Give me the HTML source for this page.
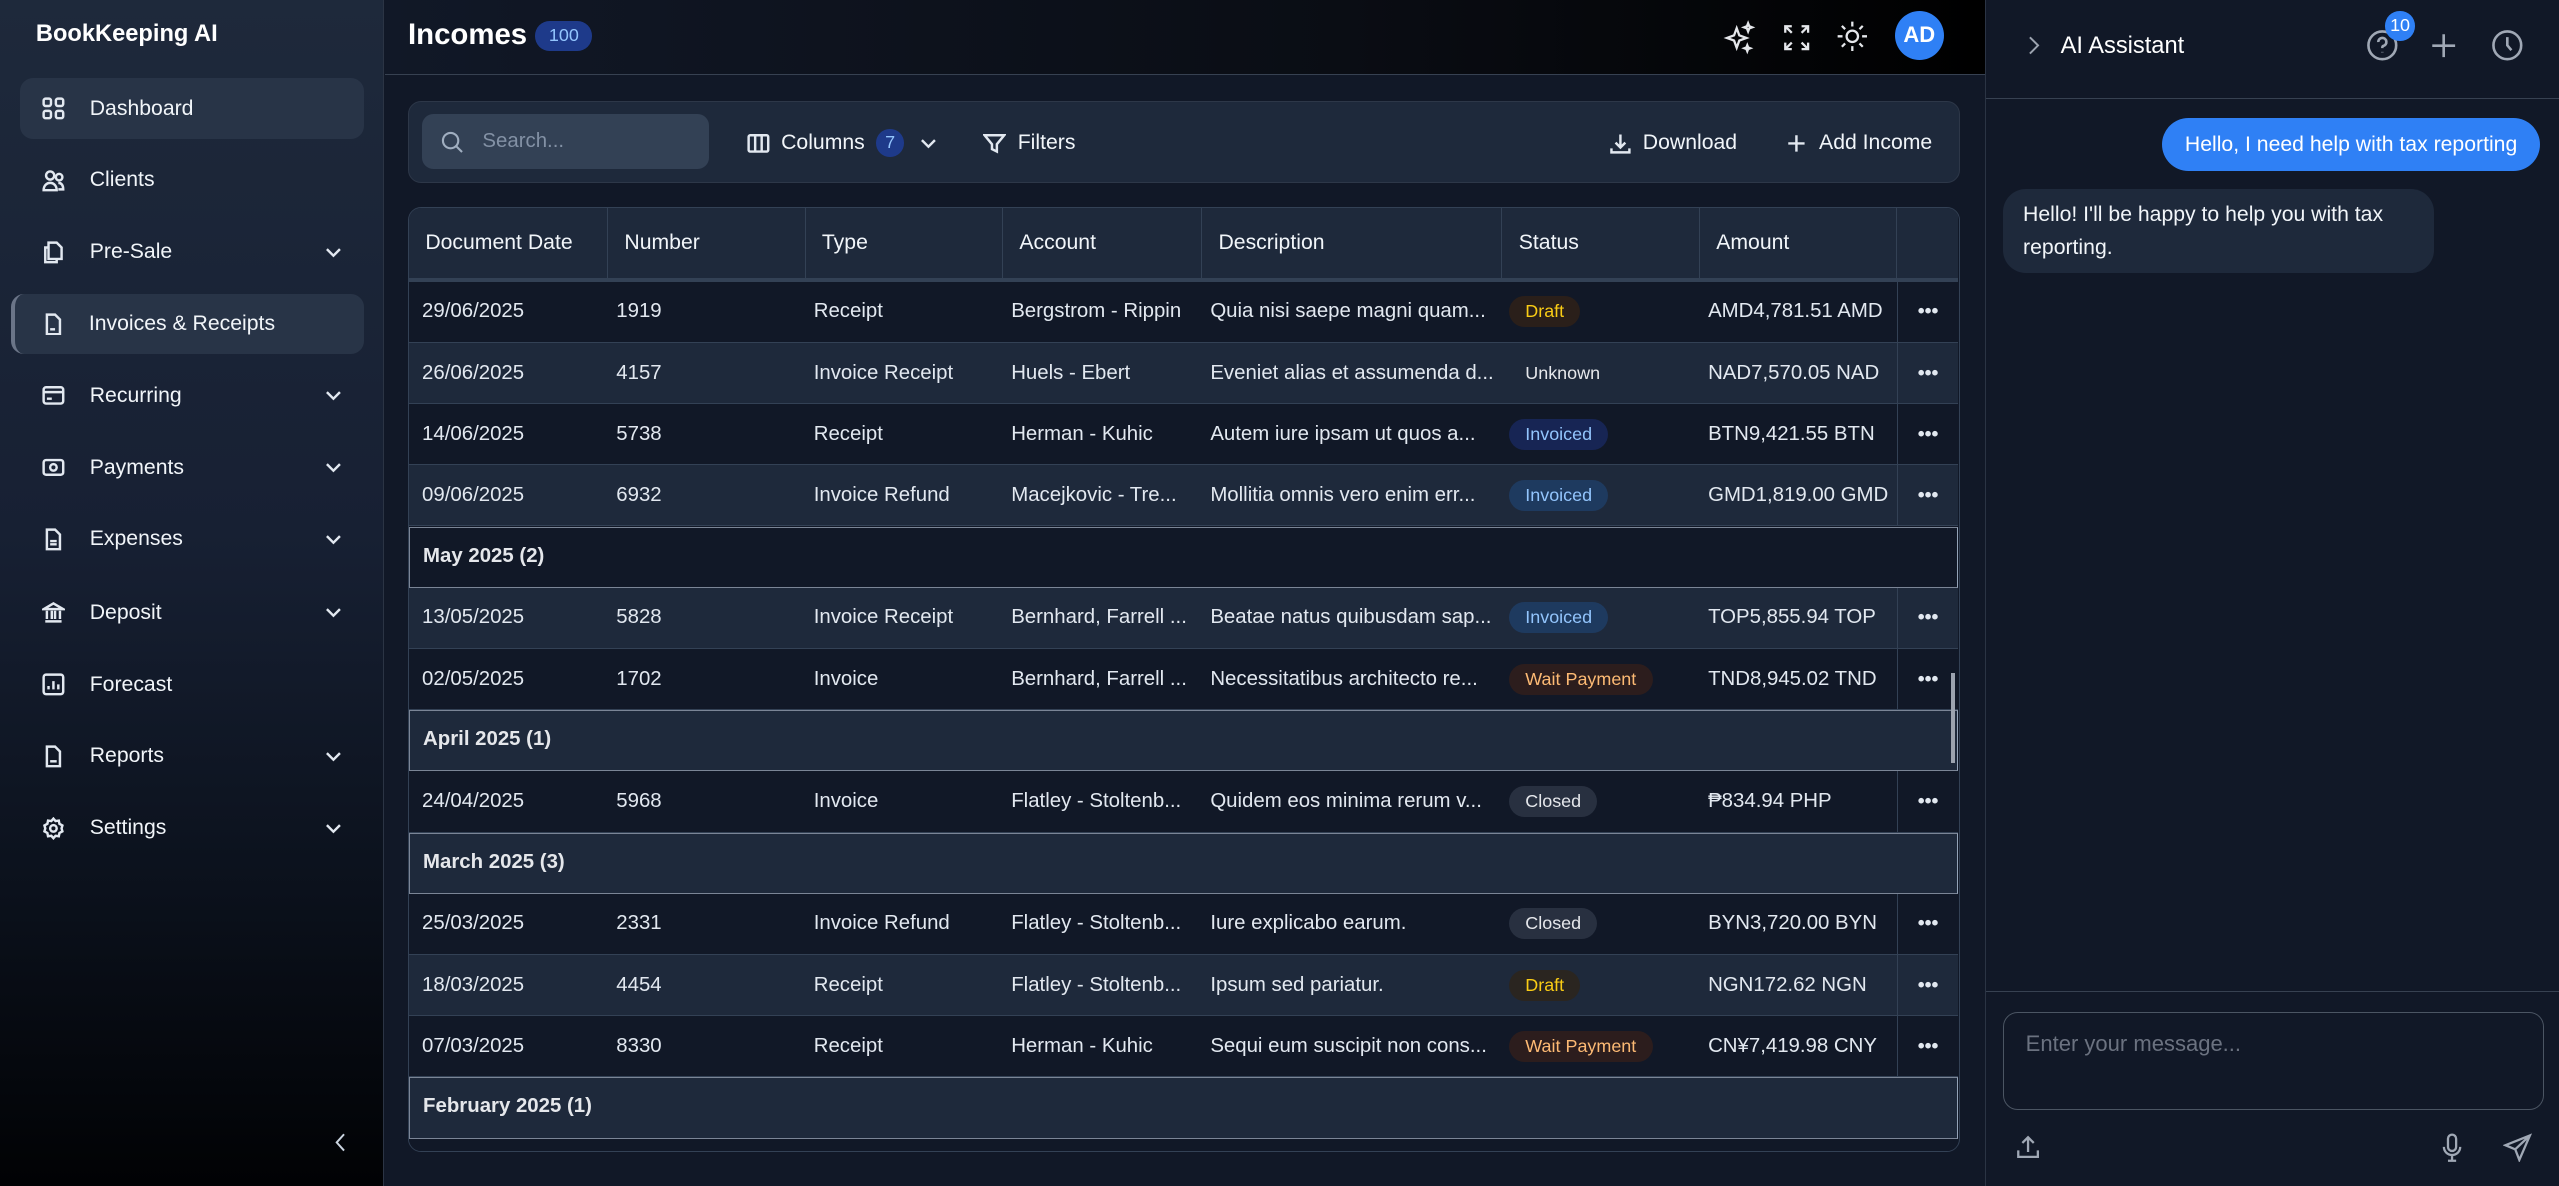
<!DOCTYPE html>
<html><head><meta charset="utf-8"><style>
*{box-sizing:border-box;margin:0;padding:0}
html,body{width:2559px;height:1186px;overflow:hidden;background:#111827}
#r{zoom:1.63202;width:1568px;height:727px;position:relative;font-family:"Liberation Sans",sans-serif;color:#e2e8f0;font-size:12.5px;background:#111827;overflow:hidden}
.abs{position:absolute}
#sb{left:0;top:0;width:235px;height:727px;background:linear-gradient(180deg,#1e293b 0%,#172033 45%,#0b111c 75%,#010204 100%);border-right:1px solid #2b3444}
.logo{left:22px;top:13px;font-weight:bold;font-size:14.5px;color:#fff}
.nav{left:12px;width:211px;height:37px;border-radius:8px;display:flex;align-items:center;padding-left:14px;font-size:13px;color:#f1f5f9}
.nav.act{background:#283447}
.nav svg{width:14px;height:14px;margin-right:15px;stroke:#e2e8f0;fill:none;stroke-width:1.5}
.nav .chev{position:absolute;right:12px;margin:0}
#hd{left:236px;top:0;width:980px;height:46px;background:linear-gradient(90deg,#111827 0%,#0a0d14 60%,#000 100%);border-bottom:1px solid #374151}
.title{left:14px;top:11px;font-size:18px;font-weight:bold;color:#fff}
.badge{left:92px;top:13px;width:35px;height:18px;border-radius:9px;background:#1e3a8a;color:#93c5fd;font-size:11px;text-align:center;line-height:18px}
#tb{left:250px;top:62px;width:951px;height:50px;background:#1e293b;border:1px solid #2d3748;border-radius:8px}
.search{left:8px;top:7px;width:176px;height:34px;background:#334155;border-radius:7px;color:#8391a5;font-size:12.5px;padding-left:37px;line-height:34px}
.tbtn{top:0;height:50px;display:flex;align-items:center;font-size:13px;color:#f1f5f9}
.tbtn svg{stroke:#e2e8f0;fill:none;stroke-width:1.5;width:14px;height:14px;margin-right:7px}
#tbl{left:250px;top:127px;width:951px;height:579px;border:1px solid #334155;border-radius:8px;overflow:hidden;background:#111827}
.row{position:absolute;left:0;width:949px;height:37.5px;border-bottom:1px solid #334155}
.row div{position:absolute;top:0;height:100%;display:flex;align-items:center;white-space:nowrap;overflow:hidden;font-size:12.5px;color:#e2e8f0}
.hrow{top:0;height:45px;background:#1e293b;border-bottom:3px solid #334155}
.hrow div{border-right:1px solid #334155;padding-left:10px;font-size:13px;color:#f1f5f9}
.L{background:#1e293b}.D{background:#111827}
.grp{position:absolute;left:0;width:949px;height:37.5px;border:1px solid #7b8596;border-right-color:#94a3b8;font-weight:bold;font-size:12.5px;padding-left:8px;line-height:35px;color:#e5e7eb}
.pill{height:19px!important;top:9px!important;border-radius:10px;padding:0 10px;font-size:11px!important}
.dots{font-weight:bold;font-size:12px!important;justify-content:center;border-left:1px solid #334155}
#ai{left:1216px;top:0;width:352px;height:727px;background:#111827;border-left:1px solid #2b3444}
</style></head><body><div id="r">

<div id="sb" class="abs">
<div class="abs logo">BookKeeping AI</div>
<div class="abs nav act" style="top:48px"><svg viewBox="0 0 14 14"><rect x="1" y="1" width="4.5" height="4.5" rx="1.2"/><rect x="8.5" y="1" width="4.5" height="4.5" rx="1.2"/><rect x="1" y="8.5" width="4.5" height="4.5" rx="1.2"/><rect x="8.5" y="8.5" width="4.5" height="4.5" rx="1.2"/></svg>Dashboard</div>
<div class="abs nav" style="top:92px"><svg viewBox="0 0 14 14"><circle cx="5" cy="4" r="2.5"/><path d="M1 13c0-3 2-4.5 4-4.5s4 1.5 4 4.5z"/><circle cx="10.5" cy="5" r="2"/><path d="M10 8.5c2 0 3 1.5 3 4h-3"/></svg>Clients</div>
<div class="abs nav" style="top:136px"><svg viewBox="0 0 14 14"><path d="M4 1h5l3 3v7H4z"/><path d="M4 4H2v9h7v-2"/></svg>Pre-Sale<svg class="chev" viewBox="0 0 14 14"><path d="M3 5l4 4 4-4"/></svg></div>
<div class="abs nav act" style="top:180px;left:7px;width:216px;padding-left:16px;border-left:3px solid #6b7588"><svg viewBox="0 0 14 14"><path d="M3 1h5l3 3v9H3z"/><path d="M5 10h3"/></svg>Invoices &amp; Receipts</div>
<div class="abs nav" style="top:224px"><svg viewBox="0 0 14 14"><rect x="1" y="2" width="12" height="10" rx="1.5"/><path d="M1 5h12M3 9h3"/></svg>Recurring<svg class="chev" viewBox="0 0 14 14"><path d="M3 5l4 4 4-4"/></svg></div>
<div class="abs nav" style="top:268px"><svg viewBox="0 0 14 14"><rect x="1" y="2.5" width="12" height="9" rx="1.5"/><circle cx="7" cy="7" r="2"/></svg>Payments<svg class="chev" viewBox="0 0 14 14"><path d="M3 5l4 4 4-4"/></svg></div>
<div class="abs nav" style="top:312px"><svg viewBox="0 0 14 14"><path d="M3 1h5l3 3v9H3z"/><path d="M5 8h4M5 10h4"/></svg>Expenses<svg class="chev" viewBox="0 0 14 14"><path d="M3 5l4 4 4-4"/></svg></div>
<div class="abs nav" style="top:357px"><svg viewBox="0 0 14 14"><path d="M1 5l6-3.5L13 5zM2 12.5h10M3 6v5M6 6v5M8 6v5M11 6v5"/></svg>Deposit<svg class="chev" viewBox="0 0 14 14"><path d="M3 5l4 4 4-4"/></svg></div>
<div class="abs nav" style="top:401px"><svg viewBox="0 0 14 14"><rect x="1" y="1" width="12" height="12" rx="1.5"/><path d="M4 10V8M7 10V5M10 10V7"/></svg>Forecast</div>
<div class="abs nav" style="top:445px"><svg viewBox="0 0 14 14"><path d="M3 1h5l3 3v9H3z"/><path d="M5 10h4"/></svg>Reports<svg class="chev" viewBox="0 0 14 14"><path d="M3 5l4 4 4-4"/></svg></div>
<div class="abs nav" style="top:489px"><svg viewBox="0 0 14 14"><circle cx="7" cy="7" r="2"/><path d="M7 1l1.3 1.5 2-.3.4 2 1.8 1L12 7l.5 1.8-1.8 1-.4 2-2-.3L7 13l-1.3-1.5-2 .3-.4-2-1.8-1L2 7l-.5-1.8 1.8-1 .4-2 2 .3z"/></svg>Settings<svg class="chev" viewBox="0 0 14 14"><path d="M3 5l4 4 4-4"/></svg></div>
<svg class="abs" style="left:203px;top:693px" width="12" height="14" viewBox="0 0 12 14"><path d="M8 2L3.5 7 8 12" stroke="#cbd5e1" fill="none" stroke-width="1.2"/></svg>
</div>

<div id="hd" class="abs">
<div class="abs title">Incomes</div>
<div class="abs badge">100</div>
<svg class="abs" style="left:819px;top:12px" width="22" height="22" viewBox="0 0 22 22" fill="none" stroke="#e5e7eb" stroke-width="1.4"><path d="M9 5l1.6 4.4L15 11l-4.4 1.6L9 17l-1.6-4.4L3 11l4.4-1.6z"/><path d="M16 2l.7 1.8L18.5 4.5l-1.8.7L16 7l-.7-1.8-1.8-.7 1.8-.7z"/><path d="M15.5 15.5l.5 1.3 1.3.5-1.3.5-.5 1.3-.5-1.3-1.3-.5 1.3-.5z"/></svg>
<svg class="abs" style="left:856px;top:14px" width="18" height="18" viewBox="0 0 18 18" fill="none" stroke="#e5e7eb" stroke-width="1.4"><path d="M2 6V2h4M2 2l4 4M16 6V2h-4M16 2l-4 4M2 12v4h4M2 16l4-4M16 12v4h-4M16 16l-4-4"/></svg>
<svg class="abs" style="left:889px;top:12px" width="20" height="20" viewBox="0 0 20 20" fill="none" stroke="#e5e7eb" stroke-width="1.4"><circle cx="10" cy="10" r="3.5"/><path d="M10 1v3M10 16v3M1 10h3M16 10h3M3.6 3.6l2 2M14.4 14.4l2 2M3.6 16.4l2-2M14.4 5.6l2-2"/></svg>
<div class="abs" style="left:925px;top:7px;width:30px;height:30px;border-radius:50%;background:#2f80f5;color:#fff;font-weight:bold;font-size:13.5px;text-align:center;line-height:30px">AD</div>
</div>

<div id="tb" class="abs">
<div class="abs search">Search...</div>
<svg class="abs" style="left:19px;top:17px" width="15" height="15" viewBox="0 0 15 15" fill="none" stroke="#a0aec0" stroke-width="1.3"><circle cx="6.5" cy="6.5" r="4.7"/><path d="M10 10l3.5 3.5"/></svg>
<div class="abs tbtn" style="left:207px"><svg viewBox="0 0 14 14"><rect x="1" y="2" width="12" height="10" rx="1"/><path d="M5 2v10M9 2v10"/></svg>Columns<span style="display:inline-block;width:17px;height:17px;border-radius:50%;background:#1e3a8a;color:#93c5fd;font-size:11px;text-align:center;line-height:17px;margin-left:7px">7</span><svg viewBox="0 0 14 14" style="margin-left:8px"><path d="M3 5l4 4 4-4"/></svg></div>
<div class="abs tbtn" style="left:352px"><svg viewBox="0 0 14 14"><path d="M1 2h12L8.5 7.5V12l-3-1.5v-3z"/></svg>Filters</div>
<div class="abs tbtn" style="left:735px"><svg viewBox="0 0 14 14"><path d="M7 1.5v8M4 6.5l3 3 3-3M1.5 10v2.5h11V10"/></svg>Download</div>
<div class="abs tbtn" style="left:843px"><svg viewBox="0 0 14 14"><path d="M7 2v10M2 7h10"/></svg>Add Income</div>
</div>

<div id="tbl" class="abs">
<div class="row hrow">
<div style="left:0;width:122px">Document Date</div><div style="left:122px;width:121px">Number</div><div style="left:243px;width:121px">Type</div><div style="left:364px;width:122px">Account</div><div style="left:486px;width:184px">Description</div><div style="left:670px;width:121px">Status</div><div style="left:791px;width:121px">Amount</div><div style="left:912px;width:37px;border-right:none"></div>
</div>
<div id="rows"></div>
</div>

<div id="ai" class="abs">
<svg class="abs" style="left:24px;top:21px" width="10" height="14" viewBox="0 0 10 14"><path d="M3 2l5 5-5 5" stroke="#9ca3af" fill="none" stroke-width="1.2"/></svg>
<div class="abs" style="left:46px;top:20px;font-size:14.5px;color:#fff">AI Assistant</div>
<svg class="abs" style="left:233px;top:18px" width="20" height="20" viewBox="0 0 20 20"><circle cx="10" cy="10" r="8.5" stroke="#a0a8b5" fill="none" stroke-width="1.6"/><path d="M7.5 8a2.5 2.5 0 1 1 3 2.4c-.5.2-.5.6-.5 1.3M10 14v.3" stroke="#a0a8b5" fill="none" stroke-width="1.6"/></svg>
<div class="abs" style="left:245px;top:7px;width:18px;height:18px;border-radius:9px;background:#2f80f5;color:#fff;font-size:11px;text-align:center;line-height:18px">10</div>
<svg class="abs" style="left:272px;top:19px" width="18" height="18" viewBox="0 0 18 18"><path d="M9 2v14M2 9h14" stroke="#a0a8b5" stroke-width="1.6"/></svg>
<svg class="abs" style="left:310px;top:18px" width="20" height="20" viewBox="0 0 20 20"><circle cx="10" cy="10" r="8.5" stroke="#a0a8b5" fill="none" stroke-width="1.6"/><path d="M10 5v5l2.5 3" stroke="#a0a8b5" fill="none" stroke-width="1.6"/></svg>
<div class="abs" style="left:0;top:60px;width:352px;border-top:1px solid #374151"></div>
<div class="abs" style="left:108px;top:72px;width:232px;height:33px;border-radius:17px;background:#2f80f5;color:#fff;font-size:13px;line-height:33px;text-align:center">Hello, I need help with tax reporting</div>
<div class="abs" style="left:11px;top:116px;width:264px;height:51px;border-radius:14px;background:#1e293b;color:#f1f5f9;font-size:13px;line-height:20px;padding:6px 12px">Hello! I'll be happy to help you with tax reporting.</div>
<div class="abs" style="left:0;top:607px;width:352px;border-top:1px solid #374151"></div>
<div class="abs" style="left:11px;top:620px;width:331px;height:60px;border:1px solid #4b5563;border-radius:9px;color:#6b7280;font-size:13.5px;padding:11px 13px">Enter your message...</div>
<svg class="abs" style="left:18px;top:695px" width="16" height="16" viewBox="0 0 16 16" fill="none" stroke="#a0a8b5" stroke-width="1.4"><path d="M8 11V2M4.5 5.5L8 2l3.5 3.5M2 10v4h12v-4"/></svg>
<svg class="abs" style="left:278px;top:694px" width="16" height="18" viewBox="0 0 16 18" fill="none" stroke="#a0a8b5" stroke-width="1.4"><rect x="5.5" y="1" width="5" height="10" rx="2.5"/><path d="M3 8.5a5 5 0 0 0 10 0M8 13.5V17M5.5 17h5"/></svg>
<svg class="abs" style="left:317px;top:694px" width="18" height="18" viewBox="0 0 18 18" fill="none" stroke="#a0a8b5" stroke-width="1.4"><path d="M16.5 1.5L1.5 7.5l6 2.5 2.5 6.5z M7.5 10l9-8.5"/></svg>
</div>

<script>
var data=[
['r','D','29/06/2025','1919','Receipt','Bergstrom - Rippin','Quia nisi saepe magni quam...',['Draft','#2a1f1a','#facc15'],'AMD4,781.51 AMD'],
['r','L','26/06/2025','4157','Invoice Receipt','Huels - Ebert','Eveniet alias et assumenda d...',['Unknown','transparent','#e5e7eb'],'NAD7,570.05 NAD'],
['r','D','14/06/2025','5738','Receipt','Herman - Kuhic','Autem iure ipsam ut quos a...',['Invoiced','#172554','#93c5fd'],'BTN9,421.55 BTN'],
['r','L','09/06/2025','6932','Invoice Refund','Macejkovic - Tre...','Mollitia omnis vero enim err...',['Invoiced','#1e3a5f','#93c5fd'],'GMD1,819.00 GMD'],
['g','D','May 2025 (2)'],
['r','L','13/05/2025','5828','Invoice Receipt','Bernhard, Farrell ...','Beatae natus quibusdam sap...',['Invoiced','#1e3a5f','#93c5fd'],'TOP5,855.94 TOP'],
['r','D','02/05/2025','1702','Invoice','Bernhard, Farrell ...','Necessitatibus architecto re...',['Wait Payment','#2c1d1d','#fdba74'],'TND8,945.02 TND'],
['g','L','April 2025 (1)'],
['r','D','24/04/2025','5968','Invoice','Flatley - Stoltenb...','Quidem eos minima rerum v...',['Closed','#283040','#e5e7eb'],'₱834.94 PHP'],
['g','L','March 2025 (3)'],
['r','D','25/03/2025','2331','Invoice Refund','Flatley - Stoltenb...','Iure explicabo earum.',['Closed','#283040','#e5e7eb'],'BYN3,720.00 BYN'],
['r','L','18/03/2025','4454','Receipt','Flatley - Stoltenb...','Ipsum sed pariatur.',['Draft','#2a2520','#facc15'],'NGN172.62 NGN'],
['r','D','07/03/2025','8330','Receipt','Herman - Kuhic','Sequi eum suscipit non cons...',['Wait Payment','#2c1d1d','#fdba74'],'CN¥7,419.98 CNY'],
['g','L','February 2025 (1)']
];
var h='',y=45;
var cols=[[8,114],[127,116],[248,116],[369,116],[491,175]];
data.forEach(function(d){
 if(d[0]=='g'){h+='<div class="grp '+d[1]+'" style="top:'+y+'px">'+d[2]+'</div>';}
 else{
  h+='<div class="row '+d[1]+'" style="top:'+y+'px">';
  for(var i=0;i<5;i++)h+='<div style="left:'+cols[i][0]+'px;width:'+cols[i][1]+'px">'+d[i+2]+'</div>';
  var p=d[7];h+='<div class="pill" style="left:674px;background:'+p[1]+';color:'+p[2]+'">'+p[0]+'</div>';
  h+='<div style="left:796px;width:116px">'+d[8]+'</div>';
  h+='<div class="dots" style="left:912px;width:37px">•••</div></div>';
 }
 y+=37.5;
});
h+='<div class="row D" style="top:'+y+'px;height:40px;border:none"></div>';
h+='<div class="abs" style="left:945px;top:285px;width:2px;height:55px;background:#9ca3af"></div>';
document.getElementById('rows').innerHTML=h;
</script>
</div></body></html>
